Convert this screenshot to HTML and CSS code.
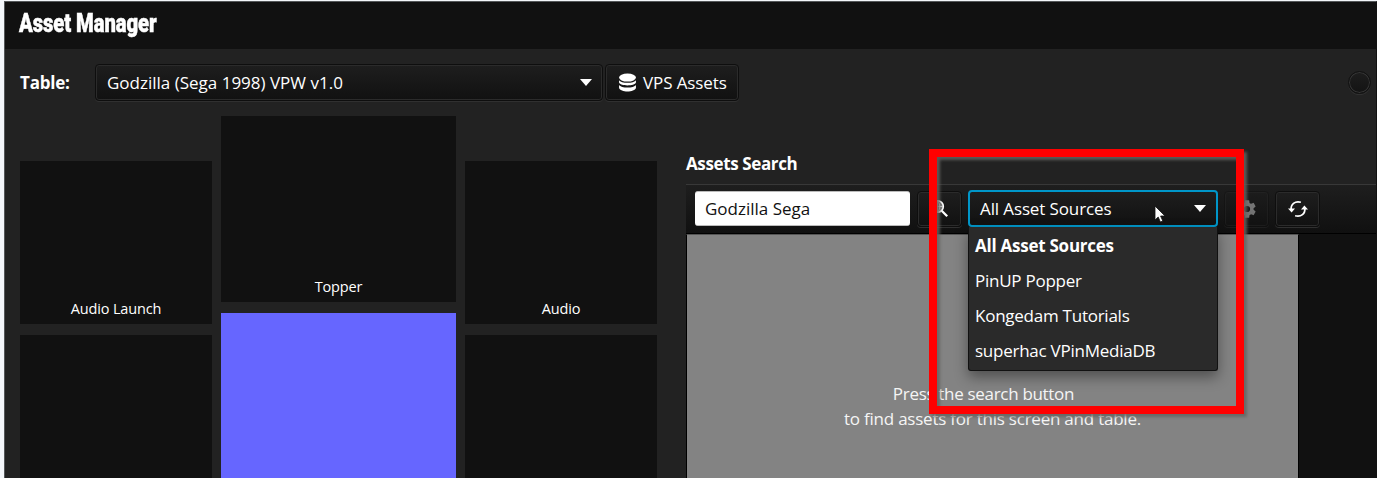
FILE: index.html
```
<!DOCTYPE html>
<html lang="en">
<head>
<meta charset="utf-8">
<title>Asset Manager</title>
<link rel="stylesheet" href="styles.css">
</head>
<body>
<div class="window">
  <header class="titlebar"><h1>Asset Manager</h1></header>
  <main class="content">
    <div class="table-row">
      <span class="label">Table:</span>
      <div class="control combo table-combo"><span>Godzilla (Sega 1998) VPW v1.0</span><i class="arrow"></i></div>
      <div class="control vps">
        <svg class="db" viewBox="0 0 18 18"><ellipse cx="9" cy="4.3" rx="8" ry="3.8"/><path d="M1 6.9c1.8 3.2 14.2 3.2 16 0v2.2c-1.2 3.6-14.8 3.6-16 0zM1 11.4c1.8 3.2 14.2 3.2 16 0v2.8c-1.2 4.4-14.8 4.4-16 0z"/></svg>
        <span class="vps-text">VPS Assets</span>
      </div>
      <div class="round"></div>
    </div>
    <div class="columns">
      <div class="screens">
        <div class="col side"><div class="tile"><span>Audio Launch</span></div><div class="tile"></div></div>
        <div class="col middle"><div class="tile"><span>Topper</span></div><div class="tile selected"></div></div>
        <div class="col side"><div class="tile"><span>Audio</span></div><div class="tile"></div></div>
      </div>
      <section class="search">
        <h2>Assets Search</h2>
        <div class="toolbar">
          <div class="input"><span>Godzilla Sega</span></div>
          <div class="control icon-btn">
            <svg viewBox="0 0 20 20"><circle cx="7.5" cy="7.5" r="5.8" fill="#777" stroke="#fff" stroke-width="1.6"/><path d="M2 7.5h11M7.5 2v11M7.5 2c-3 3-3 8 0 11M7.5 2c3 3 3 8 0 11" fill="none" stroke="#ddd" stroke-width=".8"/><path d="M11.7 11.7l5.5 5.5" stroke="#fff" stroke-width="2.3"/></svg>
          </div>
          <div class="control combo source-combo"><span class="source-text">All Asset Sources</span><i class="arrow"></i>
            <ul class="popup">
              <li class="current">All Asset Sources</li>
              <li>PinUP Popper</li>
              <li>Kongedam Tutorials</li>
              <li>superhac VPinMediaDB</li>
            </ul>
          </div>
          <div class="control icon-btn disabled">
            <svg viewBox="0 0 24 24"><path fill="#fff" d="M19.14 12.94c.04-.3.06-.61.06-.94s-.02-.64-.07-.94l2.03-1.58a.5.5 0 0 0 .12-.61l-1.92-3.32a.5.5 0 0 0-.59-.22l-2.39.96a7 7 0 0 0-1.62-.94l-.36-2.54A.48.48 0 0 0 13.92 2.4h-3.84a.48.48 0 0 0-.47.41l-.36 2.54c-.59.24-1.13.57-1.62.94l-2.39-.96a.48.48 0 0 0-.59.22L2.74 8.87a.48.48 0 0 0 .12.61l2.03 1.58a6 6 0 0 0 0 1.88l-2.03 1.58a.5.5 0 0 0-.12.61l1.92 3.32c.12.22.37.29.59.22l2.39-.96c.5.38 1.03.7 1.62.94l.36 2.54c.05.24.24.41.48.41h3.84c.24 0 .44-.17.47-.41l.36-2.54a7 7 0 0 0 1.62-.94l2.39.96c.22.08.47 0 .59-.22l1.92-3.32a.48.48 0 0 0-.12-.61zM12 15.4a3.4 3.4 0 1 1 0-6.8 3.4 3.4 0 0 1 0 6.8z"/></svg>
          </div>
          <div class="control icon-btn refresh">
            <svg viewBox="0 0 20 20"><g fill="none" stroke="#fff" stroke-width="1.7"><path d="M3.2 11C2.4 5.4 7 1.6 12.9 3.3"/><path d="M16.8 9c.8 5.6-3.8 9.4-9.7 7.7"/></g><path fill="#fff" d="M0 9.6h7L3.6 13.6zM20 10.4h-7L16.4 6.4z"/></svg>
          </div>
        </div>
        <div class="results"><div class="placeholder"><p class="first-line">Press the search button</p><p>to find assets for this screen and table.</p></div></div>
      </section>
    </div>
  </main>
</div>
<div class="highlight"></div>
<svg class="cursor" viewBox="0 0 12 18"><path d="M1 1v14l3.2-3 2.2 5 2.4-1-2.2-5H11z" fill="#fff" stroke="#111" stroke-width=".8"/></svg>
</body>
</html>
```
FILE: styles.css
```
* { box-sizing: border-box; }
body {
  margin: 0; width: 1377px; height: 478px; overflow: hidden; position: relative;
  padding: 1px 0 0 4px; background: #f4f7fb; color: #fff;
  font: 17px/24px "Open Sans", "Noto Sans", sans-serif;
}
.window {
  height: 477px; overflow: hidden; background: #222;
  border: 1px solid #55585a; border-width: 1px 1px 0 1px; border-right-color: #111;
}
.titlebar { height: 47px; background: #111; padding: 7px 0 0 14px; }
h1 {
  margin: 0; font: 900 25px/30px Roboto, sans-serif; white-space: nowrap;
  display: inline-block; transform: scaleX(.81); transform-origin: left; letter-spacing: -.1px;
  -webkit-text-stroke: .5px #fff;
}
span, p { white-space: nowrap; }
.content { padding: 15px 0 0 15px; }
.table-row { display: flex; align-items: center; height: 37px; }
.label { width: 75px; font-weight: 700; letter-spacing: -.2px; }
.control {
  display: flex; align-items: center; border: 1px solid #0e0e0e; border-radius: 4px;
  background: linear-gradient(#1e1e1e, #111);
  box-shadow: inset 0 0 0 1px #2b2b2b, 0 1px 0 #303030;
}
.combo { justify-content: space-between; }
.arrow { border: 6px solid transparent; border-top: 7px solid #fff; border-bottom: 0; }
.table-combo { width: 508px; height: 37px; padding: 0 10px 0 11px; }
.vps { margin-left: 2px; width: 134px; height: 37px; padding-left: 12px; }
.vps-text { letter-spacing: -.1px; }
.db { width: 19px; height: 19px; margin-right: 6px; fill: #fff; }
.round {
  margin: 0 5px 0 auto; width: 23px; height: 23px; border-radius: 50%;
  background: linear-gradient(#1e1e1e, #131313); border: 1px solid #111;
  box-shadow: inset 0 0 0 1px #363636, 0 1px 0 #303030;
}
.columns { display: flex; padding-top: 15px; }
.screens { display: flex; gap: 9px; }
.col { display: flex; flex-direction: column; gap: 11px; }
.side { width: 192px; padding-top: 45px; }
.middle { width: 235px; }
.tile {
  height: 163px; background: #111; display: flex; justify-content: center; align-items: flex-end;
  padding-bottom: 4px; font-size: 14.5px; line-height: 22px; letter-spacing: -.15px;
}
.middle .tile { height: 186px; }
.middle .selected { background: #66f; }
.search { margin-left: 29px; width: 690px; flex: none; }
h2 { margin: 0; height: 68px; padding-top: 36px; font-size: 17px; line-height: 24px; letter-spacing: -.38px; }
.toolbar {
  height: 50px; border-top: 1px solid #383838; padding: 5px 0 0 9px; display: flex;
  background: linear-gradient(#1e1e1e, #101010); border-bottom: 1px solid #000;
}
.input { width: 215px; height: 35px; margin-top: 1px; background: #fff; color: #111; border-radius: 3px; padding: 5px 10px; border: 1px solid #bbb; border-width: 1px 0; }
.icon-btn { width: 45px; height: 36px; margin: 1px 0 0 7px; justify-content: center; }
.disabled { opacity: .4; margin-left: 6px; }
.icon-btn svg { width: 20px; height: 20px; }
.disabled svg { width: 22px; height: 22px; }
.refresh { margin-left: 6px; }
.source-combo { position: relative; margin-left: 6px; width: 250px; height: 37px; padding: 0 10px; border: 2px solid #0096c9; box-shadow: none; }
.source-text { letter-spacing: -.12px; }
.popup {
  position: absolute; left: -2px; top: 35px; width: 250px; height: 144px; margin: 0; padding: 1px 0 0;
  list-style: none; background: #2a2a2a; border: 1px solid #111; border-top: 0; border-radius: 0 0 3px 3px;
  box-shadow: 0 6px 14px rgba(0,0,0,.4); letter-spacing: -.25px;
}
.popup li { height: 35px; padding-left: 6px; line-height: 35px; }
.current { font-weight: 700; }
.results { height: 260px; background: #111; }
.placeholder { width: 613px; height: 260px; background: #838383; border: 1px solid #000; border-top-color: #555; padding-top: 146px; text-align: center; letter-spacing: -.23px; }
.placeholder p { margin: 0; height: 25px; line-height: 25px; color: #f5f5f5; }
.placeholder .first-line { padding-right: 18px; letter-spacing: -.31px; }
.highlight { position: absolute; left: 929px; top: 149px; width: 315px; height: 265px; border: 8px solid #f00; filter: drop-shadow(3px 3px 1.5px rgba(100,100,96,.85)); }
.cursor { position: absolute; left: 1154px; top: 205px; width: 12px; height: 18px; }
```
